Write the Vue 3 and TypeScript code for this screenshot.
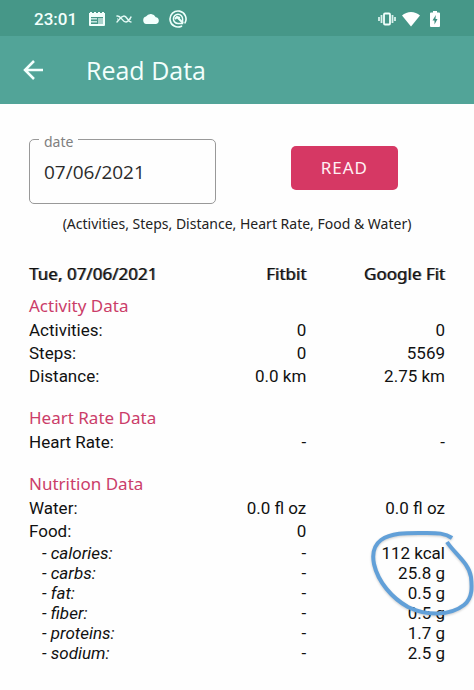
<script setup lang="ts">
import { ref } from 'vue'

interface Row {
  label: string
  fitbit: string
  google: string
  sub?: boolean
}
interface Section {
  title: string
  rows: Row[]
}

const date = ref('07/06/2021')

const sections: Section[] = [
  {
    title: 'Activity Data',
    rows: [
      { label: 'Activities:', fitbit: '0', google: '0' },
      { label: 'Steps:', fitbit: '0', google: '5569' },
      { label: 'Distance:', fitbit: '0.0 km', google: '2.75 km' },
    ],
  },
  {
    title: 'Heart Rate Data',
    rows: [{ label: 'Heart Rate:', fitbit: '-', google: '-' }],
  },
  {
    title: 'Nutrition Data',
    rows: [
      { label: 'Water:', fitbit: '0.0 fl oz', google: '0.0 fl oz' },
      { label: 'Food:', fitbit: '0', google: '' },
      { label: '- calories:', fitbit: '-', google: '112 kcal', sub: true },
      { label: '- carbs:', fitbit: '-', google: '25.8 g', sub: true },
      { label: '- fat:', fitbit: '-', google: '0.5 g', sub: true },
      { label: '- fiber:', fitbit: '-', google: '0.5 g', sub: true },
      { label: '- proteins:', fitbit: '-', google: '1.7 g', sub: true },
      { label: '- sodium:', fitbit: '-', google: '2.5 g', sub: true },
    ],
  },
]
</script>

<template>
  <div class="screen">
    <div class="status">
      <div class="status-group">
        <span class="clock">23:01</span>
        <svg class="icon" viewBox="0 0 18 18" aria-hidden="true">
          <path d="M1 3h1V2h2v1h2V2h2v1h2V2h2v1h2V2h2v1h1v12a1 1 0 0 1-1 1H2a1 1 0 0 1-1-1z" fill="#f2fffc" />
          <path d="M3 7h12v7H3z" fill="#469788" />
          <path d="M3 8h6v1.500H3zM3 11h6v1.500H3z" fill="#c5e5df" />
          <path d="M10 8h5v6h-5z" fill="#a9d3cb" />
        </svg>
        <svg class="icon" viewBox="0 0 18 18" aria-hidden="true">
          <path d="M2 6c4-1 5 6 9 6 2 0 3-2 5-5M2 12c3-3 4-6 7-6 3 0 4 6 7 6" fill="none" stroke="#e5faf6" stroke-width="1.4" stroke-linecap="round" />
          <path d="M2 9h1M15 9h1" stroke="#e5faf6" stroke-width="1.2" />
        </svg>
        <svg class="icon" viewBox="0 0 18 18" aria-hidden="true">
          <path d="M4.300 14a3.800 3.800 0 0 1-.3-7.400A5.600 5.600 0 0 1 13.800 7.300a3.400 3.400 0 0 1 .3 6.700z" fill="#f4fffd" />
        </svg>
        <svg class="icon" viewBox="0 0 18 18" aria-hidden="true">
          <path d="M12.500 16.200a8 8 0 1 1 3.500-3.300" fill="none" stroke="#eefffb" stroke-width="1.6" stroke-linecap="round" />
          <path d="M13.500 13.500H9A4.600 4.600 0 1 1 13.600 9z" fill="none" stroke="#eefffb" stroke-width="1.500" />
          <path d="M6 9l2-2 6 6M8 7l3 1" fill="none" stroke="#eefffb" stroke-width="2" />
        </svg>
      </div>
      <div class="status-group right">
        <svg class="icon" viewBox="0 0 18 18" aria-hidden="true">
          <rect x="6" y="3.500" width="6" height="11" rx="1" fill="none" stroke="#f2fffc" stroke-width="1.800" />
          <path d="M3.500 5v8M14.500 5v8M1 7v4M17 7v4" stroke="#d8f1ec" stroke-width="1.800" />
        </svg>
        <svg class="icon" viewBox="0 0 18 18" aria-hidden="true">
          <path d="M0 5.500C5 .8 13 .8 18 5.500L9 16.500z" fill="#fff" />
        </svg>
        <svg class="icon" viewBox="0 0 18 18" aria-hidden="true">
          <path d="M7 1h4v1.500h2a1 1 0 0 1 1 1V16a1 1 0 0 1-1 1H5a1 1 0 0 1-1-1V3.500a1 1 0 0 1 1-1h2z" fill="#fff" />
          <path d="M9.800 5L6.500 10.500h2V14.500l3-5.500h-2z" fill="#3d8d7f" />
        </svg>
      </div>
    </div>

    <header class="appbar">
      <button class="back" type="button" aria-label="Back">
        <svg viewBox="0 0 24 24" width="24" height="24" aria-hidden="true">
          <path d="M21 12H3.500M12 3l-9 9 9 9" fill="none" stroke="#f4fffd" stroke-width="2.500" />
        </svg>
      </button>
      <h1>Read Data</h1>
    </header>

    <main>
      <form class="controls" @submit.prevent>
        <div class="field">
          <label for="date">date</label>
          <input id="date" v-model="date" type="text" />
        </div>
        <div class="action">
          <button class="read" type="submit">READ</button>
        </div>
      </form>
      <p class="hint">(Activities, Steps, Distance, Heart Rate, Food &amp; Water)</p>

      <div class="results">
        <table>
          <thead>
            <tr>
              <th scope="col">Tue, 07/06/2021</th>
              <th scope="col">Fitbit</th>
              <th scope="col">Google Fit</th>
            </tr>
          </thead>
          <tbody v-for="section in sections" :key="section.title">
            <tr class="section">
              <th colspan="3" scope="rowgroup">{{ section.title }}</th>
            </tr>
            <tr v-for="row in section.rows" :key="row.label" :class="{ sub: row.sub }">
              <th scope="row">{{ row.label }}</th>
              <td>{{ row.fitbit }}</td>
              <td>{{ row.google }}</td>
            </tr>
          </tbody>
        </table>
        <svg class="mark" viewBox="0 0 104 90" aria-hidden="true">
          <path d="M82 9C75 4 67 4 57 4C39 4 22 3 11 11C3 17 2 25 4 35C8 53 22 69 38 78C56 87 80 87 94 76C103 69 102 57 101 48C99 34 84 24 77 13" />
        </svg>
      </div>
    </main>
  </div>
</template>

<style>
body {
  margin: 0;
  background: #fefefe;
}
</style>

<style scoped>
.screen {
  font-family: Roboto, 'Noto Sans', sans-serif;
  color: #111;
  overflow: hidden;
}
.status {
  display: flex;
  justify-content: space-between;
  align-items: center;
  height: 36px;
  padding: 2px 30px 0 34px;
  box-sizing: border-box;
  background: #469788;
}
.status-group {
  display: flex;
  align-items: center;
  gap: 9px;
}
.status-group.right {
  gap: 6px;
}
.clock {
  margin-right: 2px;
  font-size: 17px;
  font-weight: 500;
  line-height: 20px;
  color: #f2fffc;
}
.icon {
  width: 18px;
  height: 18px;
}
.appbar {
  display: flex;
  align-items: center;
  gap: 40px;
  height: 68px;
  padding: 0 22px;
  background: #52a498;
}
.back {
  display: flex;
  padding: 0;
  border: 0;
  background: none;
}
h1 {
  margin: 0;
  font: 400 25px/32px 'Open Sans', 'Noto Sans', sans-serif;
  color: #f2fffc;
}
main {
  padding: 35px 29px 24px;
}
.controls {
  display: grid;
  grid-template-columns: 187px 1fr;
  align-items: center;
}
.field {
  position: relative;
  height: 65px;
  box-sizing: border-box;
  border: 1px solid #999;
  border-radius: 5px;
}
.field label {
  position: absolute;
  top: -8px;
  left: 9px;
  padding: 0 5px;
  background: #fefefe;
  font: 14px/20px 'Noto Sans', sans-serif;
  color: #808080;
}
.field input {
  width: 100%;
  height: 100%;
  padding: 0 14px;
  box-sizing: border-box;
  border: 0;
  outline: 0;
  background: none;
  font: 19px/24px 'Open Sans', 'Noto Sans', sans-serif;
  color: #2b2b2b;
}
.action {
  display: flex;
  justify-content: flex-end;
  padding: 0 47px 8px 0;
}
.read {
  padding: 10px 30px;
  border: 0;
  border-radius: 5px;
  background: #d63864;
  font: 17px/24px 'Noto Sans', sans-serif;
  letter-spacing: 1px;
  color: #fff0f4;
}
.hint {
  margin: 10px 0 0;
  font: 14px/20px 'Noto Sans', sans-serif;
  color: #222;
  text-align: center;
  white-space: nowrap;
}
.results {
  position: relative;
  margin-top: 28px;
}
table {
  width: 100%;
  table-layout: fixed;
  border-collapse: collapse;
  font-size: 17px;
  line-height: 23px;
}
th,
td {
  padding: 0;
  font-weight: 400;
  text-align: right;
  white-space: nowrap;
}
th:first-child {
  text-align: left;
}
thead th {
  padding-bottom: 8px;
  font-family: 'Noto Sans', sans-serif;
  line-height: 24px;
  text-shadow: 1px 0 0 rgba(17, 17, 17, 0.6);
}
.section th {
  padding: 18px 0 1px;
  font: 17px/24px 'Noto Sans', sans-serif;
  color: #cb3d69;
}
thead + tbody .section th {
  padding-top: 0;
}
.sub {
  line-height: 20px;
}
.sub th {
  padding-left: 13px;
  font-style: italic;
}
.mark {
  position: absolute;
  right: -29px;
  bottom: 44px;
  width: 104px;
  height: 90px;
  overflow: visible;
}
.mark path {
  fill: none;
  stroke: #62a0d8;
  stroke-width: 4px;
  stroke-linejoin: round;
  filter: drop-shadow(0 1px 1px rgba(0, 0, 0, 0.2));
}
</style>
